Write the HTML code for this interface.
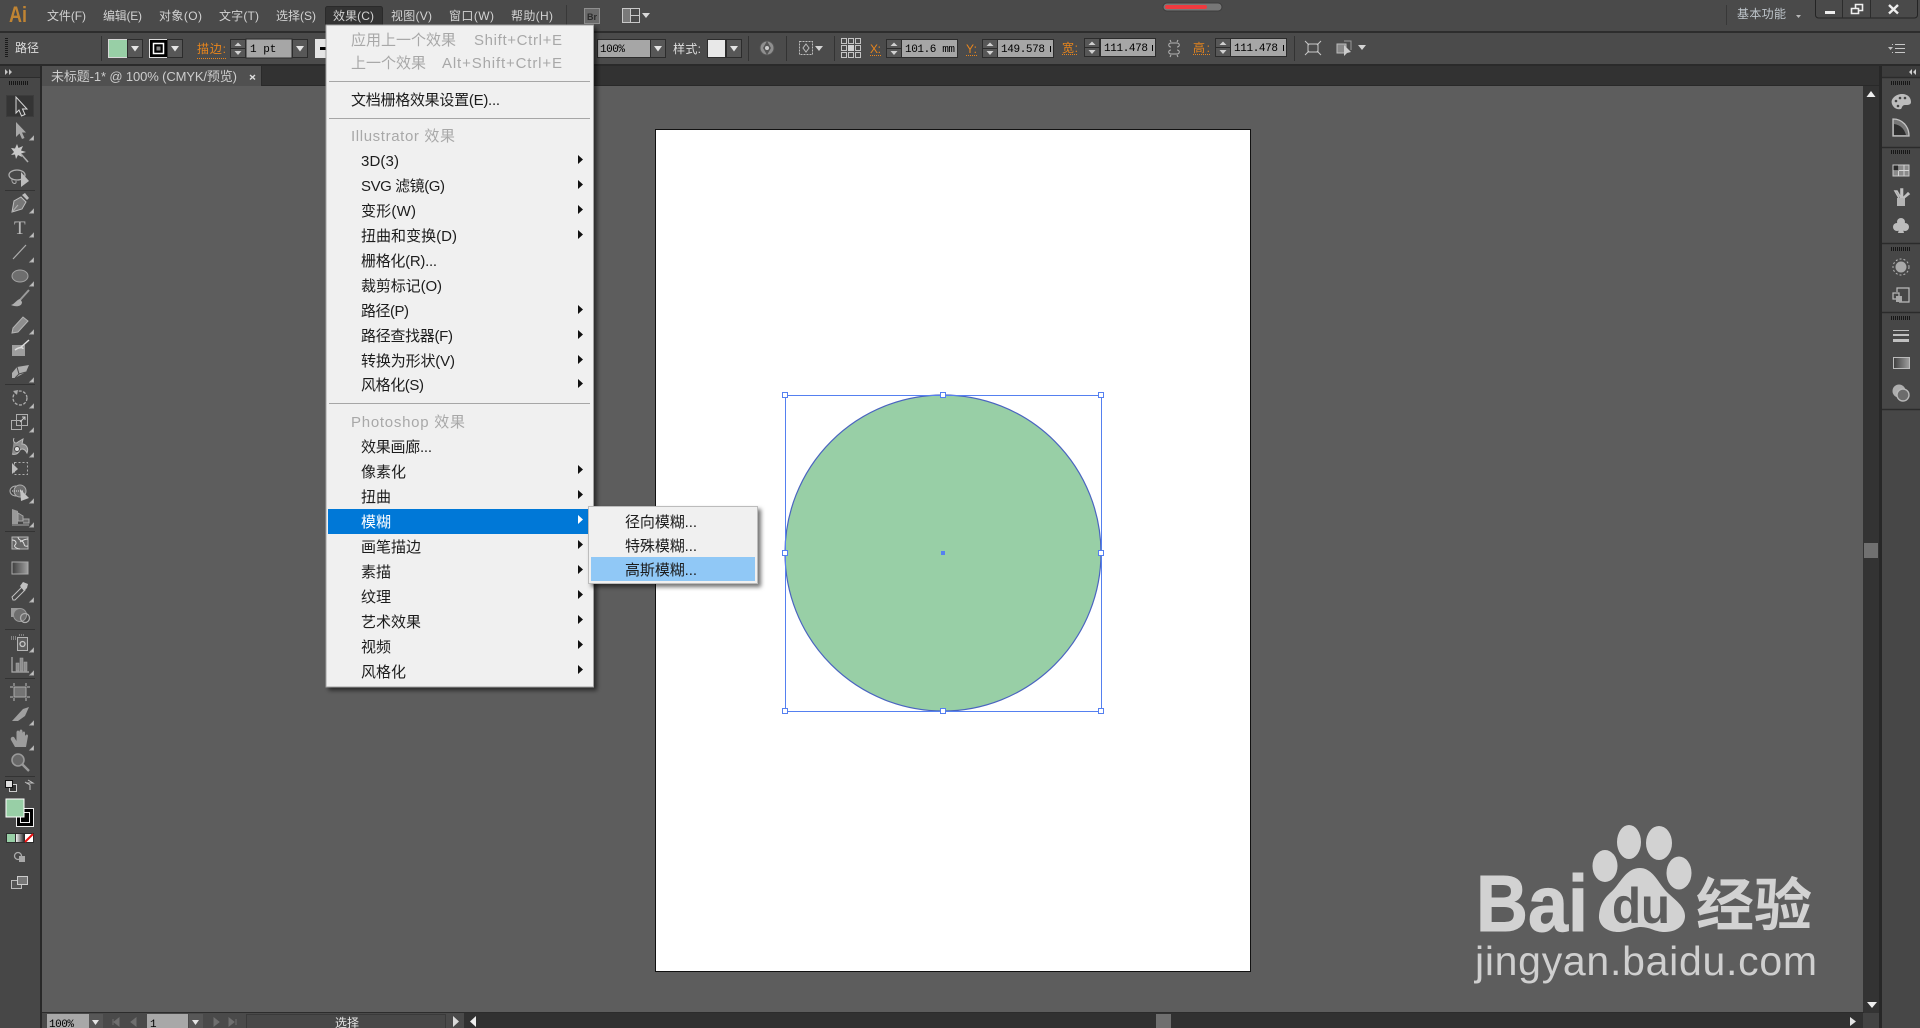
<!DOCTYPE html>
<html lang="zh"><head><meta charset="utf-8"><title>Illustrator</title>
<style>html,body{margin:0;padding:0;background:#5d5d5d;overflow:hidden}svg{display:block}text{font-family:"Liberation Sans","Noto Sans CJK SC",sans-serif}.m{font-family:"Liberation Mono","Noto Sans CJK SC",monospace}.b{font-size:12px;fill:#d2d2d2}.i{font-size:15px;fill:#1c1c1c}.d{font-size:15px;fill:#a8a8a8}.o{font-size:12px;fill:#e8851c}</style></head>
<body>
<svg xmlns="http://www.w3.org/2000/svg" width="1920" height="1028" viewBox="0 0 1920 1028">
<defs>
<linearGradient id="gr"><stop offset="0" stop-color="#3e3e3e"/><stop offset="1" stop-color="#a0a0a0"/></linearGradient>
<linearGradient id="gr2" x1="0" x2="1"><stop offset="0" stop-color="#fff"/><stop offset="1" stop-color="#222"/></linearGradient>
<filter id="sh" x="-5%" y="-5%" width="115%" height="115%"><feDropShadow dx="3" dy="3" stdDeviation="2" flood-color="#000" flood-opacity=".55"/></filter>
<g id="sp"><rect x=".5" y=".5" width="15" height="18" fill="#575757" stroke="#2c2c2c"/><path d="M1 9.500H15" stroke="#2c2c2c"/><path d="M8 3.500L11.500 7H4.500Z M8 16L11.500 12H4.500Z" fill="#d0d0d0"/></g>
<g id="ar"><rect x=".5" y=".5" width="15" height="18" fill="#575757" stroke="#2c2c2c"/><path d="M4 7H12L8 12.500Z" fill="#e4e4e4"/></g>
<path id="mk" d="M10 10H13.500V6.500Z" fill="#cfcfcf"/>
<path id="ma" d="M0 0V9L5 4.500Z" fill="#111"/>
<g id="hd"><rect x="-2.500" y="-2.500" width="5" height="5" fill="#fff" stroke="#5580f0"/></g>
<path id="gp" d="M0 0H19" stroke="#161616" stroke-width="4" stroke-dasharray="1 1" fill="none"/>
</defs>

<!-- base -->
<rect width="1920" height="1028" fill="#5d5d5d"/>
<rect width="1920" height="31" fill="#4a4a4a"/>
<rect y="31" width="1920" height="2" fill="#2d2d2d"/>
<rect y="33" width="1920" height="32" fill="#4b4b4b"/>
<rect y="64" width="1920" height="2" fill="#2a2a2a"/>
<rect y="66" width="1920" height="20" fill="#323232"/>
<rect y="85" width="1920" height="1" fill="#292929"/>

<!-- artboard -->
<rect x="655.500" y="129.500" width="595" height="842" fill="#fff" stroke="#111"/>
<circle cx="943" cy="553" r="158" fill="#98cfa6" stroke="#4a64c0" stroke-width="1.200"/>
<rect x="785.500" y="395.500" width="316" height="316" fill="none" stroke="#5580f0"/>
<use href="#hd" x="785" y="395"/><use href="#hd" x="943" y="395"/><use href="#hd" x="1101" y="395"/>
<use href="#hd" x="785" y="553"/><use href="#hd" x="1101" y="553"/>
<use href="#hd" x="785" y="711"/><use href="#hd" x="943" y="711"/><use href="#hd" x="1101" y="711"/>
<rect x="941" y="551" width="4" height="4" fill="#5580f0"/>

<!-- watermark -->
<g fill="#d2d2d2">
<text x="1476" y="931" font-size="80" font-weight="700" textLength="112" lengthAdjust="spacingAndGlyphs" stroke="#d2d2d2" stroke-width="1">Bai</text>
<ellipse cx="1605" cy="866" rx="12.500" ry="16"/><ellipse cx="1629" cy="842" rx="12" ry="17"/><ellipse cx="1659" cy="843" rx="13" ry="17"/><ellipse cx="1679" cy="873" rx="12.500" ry="16.500"/>
<path d="M1640 868C1625 868 1620 885 1610 893C1600 902 1599 912 1599 918C1600 928 1610 932 1618 932C1628 932 1632 927 1641 927C1650 927 1655 932 1665 932C1677 932 1685 925 1685 916C1685 905 1672 898 1665 890C1658 882 1652 868 1640 868Z"/>
<text x="1612" y="923" font-size="50" font-weight="700" textLength="58" lengthAdjust="spacingAndGlyphs" fill="#5d5d5d">du</text>
<text x="1696" y="925" font-size="57" font-weight="700" textLength="116" lengthAdjust="spacingAndGlyphs">经验</text>
<text x="1475" y="975" font-size="41" textLength="342" lengthAdjust="spacing" fill="#cfcfcf">jingyan.baidu.com</text>
</g>

<!-- title bar -->
<text x="9" y="22" font-size="22" font-weight="700" fill="#c08433" textLength="18" lengthAdjust="spacingAndGlyphs">Ai</text>
<rect x="325.500" y="6.500" width="57" height="20" rx="2" fill="#333" stroke="#2a2a2a"/>
<text class="b" x="47" y="20" textLength="39">文件(F)</text>
<text class="b" x="103" y="20" textLength="39">编辑(E)</text>
<text class="b" x="159" y="20" textLength="43">对象(O)</text>
<text class="b" x="219" y="20" textLength="40">文字(T)</text>
<text class="b" x="276" y="20" textLength="40">选择(S)</text>
<text class="b" x="333" y="20" textLength="41">效果(C)</text>
<text class="b" x="391" y="20" textLength="41">视图(V)</text>
<text class="b" x="449" y="20" textLength="45">窗口(W)</text>
<text class="b" x="511" y="20" textLength="42">帮助(H)</text>
<path d="M566.500 5V25" stroke="#383838"/>
<rect x="584.500" y="8.500" width="15" height="15" fill="#6a6a6a" stroke="#8f8f8f"/>
<text x="587" y="20" font-size="9" fill="#2b2b2b" font-weight="700">Br</text>
<rect x="622.500" y="8.500" width="17" height="14" fill="#4a4a4a" stroke="#c8c8c8"/><rect x="623" y="9" width="7" height="13" fill="#7a7a7a"/><path d="M630.500 9V22M631 15.500H639" stroke="#c8c8c8"/>
<path d="M642 13H650L646 18Z" fill="#d8d8d8"/>
<rect x="1163" y="3" width="59" height="8" rx="4" fill="#777" stroke="#3c3c3c"/>
<rect x="1165" y="5" width="42" height="4" rx="2" fill="#ef3a3f"/>
<path d="M1726.500 5V25" stroke="#383838"/>
<text x="1737" y="18" font-size="12" fill="#bfc6cc" textLength="49">基本功能</text>
<path d="M1796 15H1801L1798.500 18Z" fill="#b8b8b8"/>
<rect x="1815.500" y="-4" width="102" height="22" rx="3" fill="#4a4a4a" stroke="#242424"/>
<path d="M1842.500 0V18M1870.500 0V18" stroke="#2c2c2c"/>
<rect x="1825" y="11" width="10" height="3" fill="#eee"/>
<path d="M1851.500 8.500H1858.500V13.500H1851.500Z M1855.500 8V4.500H1862.500V10.500H1859" fill="none" stroke="#eee" stroke-width="1.600"/>
<path d="M1889 5L1898 13.500M1898 5L1889 13.500" stroke="#eee" stroke-width="2.400"/>

<!-- control bar -->
<path d="M6.500 38V58" stroke="#1a1a1a" stroke-width="3" stroke-dasharray="1 1"/>
<text x="15" y="52" font-size="12" fill="#dedede">路径</text>
<path d="M101.500 36V61" stroke="#333"/>
<rect x="108.500" y="39.500" width="19" height="18" fill="#98cfa6" stroke="#d8d8d8"/>
<g transform="translate(127,39)"><use href="#ar"/></g>
<rect x="149.500" y="39.500" width="18" height="18" fill="#000" stroke="#ddd"/><rect x="153.500" y="43.500" width="10" height="10" fill="none" stroke="#fff" stroke-width="1.500"/><rect x="156.500" y="46.500" width="4" height="4" fill="#888"/>
<g transform="translate(167,39)"><use href="#ar"/></g>
<text class="o" x="197" y="53" textLength="29">描边:</text>
<path d="M197 58.500H226" stroke="#e8851c" stroke-dasharray="1 1"/>
<g transform="translate(230,39)"><use href="#sp"/></g>
<rect x="246" y="39" width="46" height="19" fill="#a6a6a6" stroke="#2c2c2c"/>
<text class="m" x="250" y="52" font-size="11" fill="#000">1 pt</text>
<g transform="translate(292,39)"><use href="#ar"/></g>
<rect x="315" y="39" width="14" height="19" fill="#e4e4e4"/><rect x="320" y="47" width="6" height="3" fill="#000"/>

<rect x="597.500" y="39.500" width="53" height="18" fill="#a6a6a6" stroke="#2c2c2c"/>
<text class="m" x="600" y="52" font-size="11" fill="#000" textLength="25">100%</text>
<g transform="translate(650,39)"><use href="#ar"/></g>
<text x="673" y="53" font-size="12" fill="#dedede" textLength="28">样式:</text>
<rect x="707" y="39" width="19" height="19" fill="#2c2c2c"/><rect x="708" y="40" width="17" height="17" fill="#e8e8e8"/>
<g transform="translate(726,39)"><use href="#ar"/></g>
<path d="M748.500 36V61M786.500 36V61M834.500 36V61" stroke="#333"/>
<circle cx="767" cy="48" r="7" fill="#8f8f8f" stroke="#555"/><path d="M767 41L771 48L767 55L763 48Z" fill="#555"/><circle cx="767" cy="48" r="2" fill="#ccc"/>
<rect x="799.500" y="41.500" width="13" height="13" fill="none" stroke="#bcbcbc" stroke-dasharray="2 1"/><path d="M806 44L809 48L806 52L803 48Z" fill="none" stroke="#bcbcbc"/>
<path d="M815 46H823L819 51Z" fill="#d4d4d4"/>
<g fill="none" stroke="#c4c4c4"><rect x="841.500" y="38.500" width="5" height="5"/><rect x="848.500" y="38.500" width="5" height="5"/><rect x="855.500" y="38.500" width="5" height="5"/><rect x="841.500" y="45.500" width="5" height="5"/><rect x="855.500" y="45.500" width="5" height="5"/><rect x="841.500" y="52.500" width="5" height="5"/><rect x="848.500" y="52.500" width="5" height="5"/><rect x="855.500" y="52.500" width="5" height="5"/></g><rect x="848" y="45" width="6" height="6" fill="#d0d0d0"/>

<text class="o" x="870" y="53" textLength="11">X:</text><path d="M870 55.500H881" stroke="#e8851c" stroke-dasharray="1 1"/>
<g transform="translate(886,39)"><use href="#sp"/></g>
<rect x="901.500" y="39.500" width="56" height="18" fill="#a6a6a6" stroke="#2c2c2c"/>
<text class="m" x="905" y="52" font-size="11" fill="#000" textLength="50">101.6 mm</text>
<text class="o" x="966" y="53" textLength="11">Y:</text><path d="M966 55.500H977" stroke="#e8851c" stroke-dasharray="1 1"/>
<g transform="translate(982,39)"><use href="#sp"/></g>
<rect x="997.500" y="39.500" width="56" height="18" fill="#a6a6a6" stroke="#2c2c2c"/>
<text class="m" x="1001" y="52" font-size="11" fill="#000" textLength="44">149.578</text><rect x="1050" y="46" width="1" height="6" fill="#000"/>
<text class="o" x="1062" y="52" font-size="13" textLength="16">宽:</text><path d="M1062 54.500H1078" stroke="#e8851c" stroke-dasharray="1 1"/>
<g transform="translate(1084,38)"><use href="#sp"/></g>
<rect x="1100.500" y="38.500" width="55" height="18" fill="#a6a6a6" stroke="#2c2c2c"/>
<text class="m" x="1104" y="51" font-size="11" fill="#000" textLength="44">111.478</text><rect x="1152" y="45" width="1" height="6" fill="#000"/>
<path d="M1171 47C1168 47 1168 43 1171 43H1177C1180 43 1180 47 1177 47M1171 50C1168 50 1168 54 1171 54H1177C1180 54 1180 50 1177 50M1170 40L1171 42M1178 40L1177 42M1170 57L1171 55M1178 57L1177 55" fill="none" stroke="#b4b4b4"/>
<text class="o" x="1193" y="52" font-size="13" textLength="17">高:</text><path d="M1193 54.500H1210" stroke="#e8851c" stroke-dasharray="1 1"/>
<g transform="translate(1215,38)"><use href="#sp"/></g>
<rect x="1230.500" y="38.500" width="56" height="18" fill="#a6a6a6" stroke="#2c2c2c"/>
<text class="m" x="1234" y="51" font-size="11" fill="#000" textLength="44">111.478</text><rect x="1283" y="45" width="1" height="6" fill="#000"/>
<path d="M1294.500 36V61" stroke="#333"/>
<path d="M1308 44H1318V52H1308ZM1305 41L1309 45M1321 41L1317 45M1305 55L1309 51M1321 55L1317 51" fill="none" stroke="#c8c8c8"/>
<rect x="1337" y="44" width="9" height="9" fill="#888" stroke="#bbb"/><path d="M1344 41H1351V50" fill="none" stroke="#999"/><path d="M1344 45V56L1347 53L1351 52Z" fill="#ccc"/>
<path d="M1358 45H1366L1362 50Z" fill="#d4d4d4"/>
<path d="M1888 47H1893L1890.500 50Z" fill="#c0c0c0"/><path d="M1895 44.500H1905M1895 48.500H1905M1895 52.500H1905" stroke="#c8c8c8"/><path d="M1892 44.500H1893M1892 52.500H1893" stroke="#c8c8c8"/>

<!-- tab -->
<rect x="41" y="66" width="220" height="20" fill="#505050"/>
<path d="M261.500 66V86" stroke="#2a2a2a"/>
<text x="51" y="81" font-size="13" fill="#cdcdcd" textLength="186">未标题-1* @ 100% (CMYK/预览)</text>
<path d="M250 75L255 79.500M255 75L250 79.500" stroke="#dcdcdc" stroke-width="1.400"/>

<!-- left toolbar -->
<rect x="0" y="66" width="40" height="962" fill="#474747"/>
<rect x="0" y="66" width="40" height="11" fill="#3c3c3c"/>
<rect x="40" y="66" width="2" height="962" fill="#282828"/>
<path d="M0 77.500H40" stroke="#2c2c2c"/>
<path d="M5 69V75L8 72ZM9 69V75L12 72Z" fill="#c4c4c4"/>
<use href="#gp" x="9" y="83"/>
<rect x="6.500" y="95.500" width="27" height="21" fill="#343434" stroke="#3c3c3c"/>
<g fill="none" stroke="#adadad">
<path d="M16 97V113L19 110L21.500 116L25 114.500L22.500 109H27Z" fill="#3a3a3a" stroke="#d8d8d8"/>
<g transform="translate(20,130)"><path d="M-4-8V7L-.5 3.500L2 9L4.500 8L2 2.500H6Z" fill="#a8a8a8" stroke="none"/><use href="#mk"/></g>
<g transform="translate(20,153)"><path d="M-3-9L-1.500-5L3-7L1-2.500L6-1L1 .5L2 4L-2 2L-4 6L-5 1.500L-9 2L-6-1L-9-5L-5-4.500Z" fill="#c8c8c8" stroke="none"/><path d="M1 1L8 9" stroke-width="1.600"/></g>
<g transform="translate(20,178)"><ellipse cx="-3" cy="-3" rx="8" ry="5" stroke-width="1.300"/><path d="M1-6L9 3L1 9Z" fill="#bcbcbc" stroke="none"/><path d="M-8 1C-9 6-3 7-4 3"/></g>
<path d="M5 190.500H35M5 384.500H35M5 531.500H35M5 629.500H35M5 678.500H35M5 776.500H35" stroke="#333"/>
<g transform="translate(20,203)"><path d="M-8 9L-6-2L1-6L6-1L2 6Z" fill="#777" stroke="#bcbcbc"/><path d="M2-8L5-10L9-5L7-3Z" fill="#bcbcbc" stroke="none"/><path d="M-8 9L-2 2"/><use href="#mk"/></g>
<g transform="translate(20,227)"><text x="-6" y="7" font-size="19" fill="#b8b8b8" stroke="none" style="font-family:'Liberation Serif',serif">T</text><use href="#mk"/></g>
<g transform="translate(20,252)"><path d="M-7 7L6-7" stroke-width="1.200"/><use href="#mk"/></g>
<g transform="translate(20,276)"><ellipse cx="0" cy="0" rx="8" ry="6" fill="#6e6e6e" stroke="#a4a4a4"/><use href="#mk"/></g>
<g transform="translate(20,299)"><path d="M9-9L0 1" stroke-width="2" stroke="#9a9a9a"/><path d="M0 0C-4 1-5 5-9 6C-5 8 2 8 2 3Z" fill="#aeaeae" stroke="none"/></g>
<g transform="translate(20,324)"><path d="M-8 9L-7 4L3-7L8-3L-2 8Z" fill="#8e8e8e" stroke="#b4b4b4"/><use href="#mk"/></g>
<g transform="translate(20,348)"><path d="M-8-3H5V8H-8Z" fill="#9e9e9e" stroke="none"/><path d="M-5 2C-1-1 3-1 3 1M9-8L0 0" stroke="#ddd" stroke-width="1.500"/></g>
<g transform="translate(20,372)"><path d="M-8 1L-3-5L9-7L6 0L-5 6L-8 6Z" fill="#aeaeae" stroke="none"/><path d="M-3-5L-1 2L-5 6M-1 2L6 0" stroke="#4a4a4a"/><use href="#mk"/></g>
<g transform="translate(20,398)"><circle r="7" stroke-dasharray="3 1.500" stroke-width="1.300"/><path d="M-7-7L-2-8L-3-3Z" fill="#aaa" stroke="none"/><use href="#mk"/></g>
<g transform="translate(20,422)"><rect x="-8.500" y="-1.500" width="10" height="9"/><rect x="-3.500" y="-7.500" width="11" height="11"/><path d="M0 0L5-5M2-5H5V-2" stroke="#ccc"/><use href="#mk"/></g>
<g transform="translate(20,447)"><path d="M-6-9C-8-4-3-3-2-5L3-8L2-3C6-3 9 1 7 6C5 2 2 1 0 3C-2 7-5 8-8 7" fill="#8e8e8e" stroke="#bbb"/><circle cx="-3" cy="2" r="2.500" fill="#ddd" stroke="#444"/><use href="#mk"/></g>
<g transform="translate(20,469)"><rect x="-5.500" y="-6.500" width="13" height="12" stroke-dasharray="2 2"/><path d="M-8-6L-2 0L-8 5Z" fill="#bcbcbc" stroke="none"/></g>
<g transform="translate(20,493)"><ellipse cx="-4" cy="-2" rx="6" ry="5"/><ellipse cx="0" cy="-2" rx="6" ry="6" fill="#6c6c6c"/><path d="M0-4L9 5L1 8Z" fill="#c4c4c4" stroke="none"/><path d="M-8-2H3" stroke="#ddd" stroke-dasharray="1 1"/><use href="#mk"/></g>
<g transform="translate(20,517)"><path d="M-8-8L-2-6V7H-8Z" fill="#999" stroke="none"/><path d="M-2-4L3-1V4H-2ZM-8 8H9M3 2H9V6H3" fill="#6e6e6e" stroke="#a8a8a8"/><use href="#mk"/></g>
<g transform="translate(20,543)"><rect x="-8" y="-6" width="16" height="12" fill="#666" stroke="#b4b4b4"/><path d="M-8-3C-4-3-3 0-5 2S-2 6 0 6M-2-6C-2-3 1-3 3-1S3 4 8 3M8-4C5-4 3-3 0-1" stroke="#dedede"/></g>
<g transform="translate(20,568)"><rect x="-8" y="-6" width="16" height="12" fill="url(#gr)" stroke="#aaa"/></g>
<g transform="translate(20,592)"><path d="M-7 8L-8 5L2-5L5-2L-5 8Z" stroke="#c0c0c0"/><path d="M0-6L3-10L8-8L7-4L4-1Z" fill="#c0c0c0" stroke="none"/><use href="#mk"/></g>
<g transform="translate(20,615)"><rect x="-9" y="-7" width="9" height="9" fill="#9a9a9a" stroke="none"/><circle cx="0" cy="0" r="6.500" fill="#6e6e6e" stroke="#999"/><circle cx="5" cy="3" r="4.500" stroke-width="1.300"/></g>
<g transform="translate(20,642)"><rect x="-2.500" y="-4.500" width="10" height="13" fill="#5e5e5e" stroke="#b4b4b4"/><circle cx="2.500" cy="2" r="2.500" stroke="#c4c4c4" stroke-width="1.300"/><path d="M-9-5H-4M-9-3H-4M-1-7H4" stroke="#bbb" stroke-dasharray="1 1"/><use href="#mk"/></g>
<g transform="translate(20,665)"><path d="M-8-8V7H9" stroke-width="1.200"/><rect x="-4" y="-2" width="3" height="8" fill="#8c8c8c" stroke="#aaa" stroke-width=".5"/><rect x="0" y="-7" width="3" height="13" fill="#8c8c8c" stroke="#aaa" stroke-width=".5"/><rect x="4" y="-3" width="3" height="9" fill="#8c8c8c" stroke="#aaa" stroke-width=".5"/><use href="#mk"/></g>
<g transform="translate(20,692)"><rect x="-6" y="-5" width="12" height="10" fill="#747474" stroke="#aaa"/><path d="M-10-5H-7M7-5H10M-10 5H-7M7 5H10M-6-9V-6M6-9V-6M-6 9V6M6 9V6" stroke="#bbb"/></g>
<g transform="translate(20,715)"><path d="M-8 6L3-6L9-8L5 1L-2 6Z" fill="#a0a0a0" stroke="none"/><use href="#mk"/></g>
<g transform="translate(20,740)"><path d="M-9 0L-5 7H6L8-4C8-6 6-6 5-4V-7C5-9 3-9 2.500-7V-9C2-11 0-11-.5-9V-8C-1-10-3-10-3.500-8V1L-6-3C-8-4-10-2-9 0Z" fill="#9c9c9c" stroke="none"/><use href="#mk"/></g>
<g transform="translate(20,763)"><circle cx="-2" cy="-3" r="6" fill="#686868" stroke="#999" stroke-width="1.600"/><path d="M2 1L9 8" stroke-width="2.400" stroke="#999"/></g>
</g>
<rect x="9.500" y="784.500" width="7" height="7" fill="#333" stroke="#ccc"/><rect x="5.500" y="780.500" width="7" height="7" fill="#ddd" stroke="#111"/>
<path d="M28 780L33 783H26M30 790V785L25 782" fill="none" stroke="#c0c0c0"/>
<rect x="16.500" y="808.500" width="17" height="18" fill="#000" stroke="#eee"/><rect x="20.500" y="812.500" width="9" height="10" fill="none" stroke="#eee"/>
<rect x="6" y="799" width="18" height="18" fill="#98cfa6" stroke="#fff"/>
<rect x="6.500" y="833.500" width="9" height="9" fill="#98cfa6" stroke="#2c2c2c"/>
<rect x="15.500" y="833.500" width="9" height="9" fill="url(#gr2)" stroke="#2c2c2c"/>
<rect x="24.500" y="833.500" width="9" height="9" fill="#fff" stroke="#2c2c2c"/><path d="M25 842L33 834" stroke="#e81010" stroke-width="2"/>
<circle cx="18" cy="856" r="3.500" fill="none" stroke="#aaa" stroke-width="1.300"/><rect x="19" y="856" width="6" height="6" fill="#a8a8a8"/>
<rect x="11.500" y="880.500" width="10" height="8" fill="#555" stroke="#bbb"/><rect x="17.500" y="876.500" width="10" height="8" fill="#777" stroke="#ccc"/>

<!-- scrollbar + right dock -->
<rect x="1863" y="86" width="16" height="927" fill="#333"/>
<rect x="1879" y="66" width="3" height="962" fill="#272727"/>
<path d="M1871 91L1875.500 97H1866.500Z" fill="#eee"/>
<path d="M1867 1002H1877L1872 1008Z" fill="#eee"/>
<rect x="1864" y="543" width="14" height="15" fill="#707070"/>
<rect x="1882" y="66" width="38" height="962" fill="#474747"/>
<rect x="1882" y="66" width="38" height="11" fill="#3c3c3c"/>
<path d="M1882 77.500H1920M1882 147.500H1920M1882 243.500H1920M1882 312.500H1920M1882 409.500H1920" stroke="#2b2b2b" stroke-width="1.500"/>
<path d="M1916 69V75L1913 72ZM1912 69V75L1909 72Z" fill="#d0d0d0"/>
<use href="#gp" x="1891" y="83"/><use href="#gp" x="1891" y="152"/><use href="#gp" x="1891" y="249"/><use href="#gp" x="1891" y="318"/>
<g transform="translate(1901,102)"><path d="M-9 2C-11-3-5-8 1-8C6-8 10-5 10 0C10 3 7 3 4 3C1 3 1 6 0 7C-5 8-8 5-9 2Z" fill="#bcbcbc"/><circle cx="-5" cy="-1" r="1.300" fill="#444"/><circle cx="-1" cy="-4" r="1.300" fill="#444"/><circle cx="4" cy="-4" r="1.300" fill="#444"/><circle cx="-3" cy="4" r="1.300" fill="#444"/></g>
<g transform="translate(1901,128)"><path d="M-8-9C1-9 8-2 8 8H-8Z" fill="#777" stroke="#c4c4c4" stroke-width="1.300"/><path d="M-7 7L-7-4C-1-3 3 0 5 7Z" fill="#2e2e2e"/></g>
<g transform="translate(1901,170)"><rect x="-8" y="-5" width="16" height="11" fill="#8a8a8a" stroke="#c8c8c8"/><path d="M-2.500-5V6M3-5V6M-8 .5H8" stroke="#d4d4d4"/><rect x="-7.500" y="-4.500" width="5" height="5" fill="#2a2a2a"/></g>
<g transform="translate(1901,198)"><rect x="-4" y="0" width="8" height="8" fill="#b4b4b4"/><path d="M-2 0L-6-7L-4-7L0 0M0 0V-9H1.500V0M2 0L7-5L8-4L3 0" fill="none" stroke="#c0c0c0" stroke-width="1.600"/></g>
<g transform="translate(1901,226)" fill="#bcbcbc"><circle cx="0" cy="-4" r="4"/><circle cx="-4" cy="1" r="4"/><circle cx="4" cy="1" r="4"/><path d="M-1 0H1L3 7H-3Z"/></g>
<g transform="translate(1901,267)"><circle r="5.500" fill="#a8a8a8"/><circle r="8" fill="none" stroke="#b4b4b4" stroke-dasharray="2 2"/></g>
<g transform="translate(1901,295)"><path d="M-4-3V-7H8V7H-2" fill="none" stroke="#bcbcbc" stroke-width="1.200"/><rect x="-8" y="-2" width="6" height="6" fill="none" stroke="#bbb" stroke-width="1.200"/><rect x="-5" y="1" width="6" height="6" fill="#a8a8a8"/></g>
<g transform="translate(1901,336)" fill="#c0c0c0"><rect x="-8" y="-6" width="16" height="1"/><rect x="-8" y="-2" width="16" height="2"/><rect x="-8" y="3" width="16" height="3"/></g>
<rect x="1893.500" y="357.500" width="16" height="11" fill="url(#gr)" stroke="#bbb"/>
<g transform="translate(1901,393)"><circle cx="-2" cy="-2" r="6.500" fill="#aeaeae"/><circle cx="2" cy="2" r="6" fill="#6c6c6c" stroke="#b8b8b8" stroke-width="1.400"/></g>

<!-- status bar -->
<rect x="42" y="1013" width="1822" height="15" fill="#4a4a4a"/>
<rect x="42" y="1012" width="1822" height="1" fill="#2c2c2c"/>
<rect x="464" y="1013" width="1399" height="15" fill="#313131"/>
<rect x="47" y="1014" width="42" height="14" fill="#a8a8a8"/><text class="m" x="49" y="1027" font-size="11" fill="#000" textLength="25">100%</text>
<rect x="89" y="1014" width="14" height="14" fill="#575757"/><path d="M92 1020H99L95.500 1025Z" fill="#e4e4e4"/>
<path d="M113 1019V1025M119 1018L114 1022L119 1026ZM136 1018L131 1022L136 1026Z" fill="#6f6f6f" stroke="#6f6f6f"/>
<rect x="147" y="1014" width="41" height="14" fill="#a8a8a8"/><text class="m" x="150" y="1027" font-size="11" fill="#000">1</text>
<rect x="189" y="1014" width="14" height="14" fill="#575757"/><path d="M192 1020H199L195.500 1025Z" fill="#e4e4e4"/>
<path d="M214 1018L219 1022L214 1026ZM229 1018L234 1022L229 1026ZM236 1019V1025" fill="#6f6f6f" stroke="#6f6f6f"/>
<rect x="246.500" y="1014.500" width="199" height="14" fill="#484848" stroke="#3a3a3a"/>
<text x="335" y="1027" font-size="12" fill="#e4e4e4">选择</text>
<path d="M453 1016V1027L459 1021.500Z" fill="#dadada"/>
<path d="M476 1016V1027L470 1021.500Z" fill="#eee"/>
<rect x="1156" y="1014" width="15" height="14" fill="#6f6f6f"/>
<path d="M1850 1017V1026L1856 1021.500Z" fill="#e4e4e4"/>
<rect x="1863" y="1013" width="16" height="15" fill="#434343"/>

<!-- effect menu -->
<g filter="url(#sh)"><rect x="326" y="25" width="267.500" height="662" fill="#f0f0f0" stroke="#a2a2a2"/></g>
<path d="M329 81.500H590M329 118.500H590M329 403.500H590" stroke="#a6a6a6"/>
<text class="d" x="351" y="45" textLength="105">应用上一个效果</text>
<text class="d" x="474" y="45" textLength="88">Shift+Ctrl+E</text>
<text class="d" x="351" y="68" textLength="75">上一个效果</text>
<text class="d" x="442" y="68" textLength="120">Alt+Shift+Ctrl+E</text>
<text class="i" x="351" y="105" textLength="149">文档栅格效果设置(E)...</text>
<text class="d" x="351" y="141" textLength="104">Illustrator 效果</text>
<text class="i" x="361" y="166" textLength="38">3D(3)</text>
<text class="i" x="361" y="191" textLength="84">SVG 滤镜(G)</text>
<text class="i" x="361" y="216" textLength="55">变形(W)</text>
<text class="i" x="361" y="241" textLength="96">扭曲和变换(D)</text>
<text class="i" x="361" y="266" textLength="76">栅格化(R)...</text>
<text class="i" x="361" y="291" textLength="81">裁剪标记(O)</text>
<text class="i" x="361" y="316" textLength="48">路径(P)</text>
<text class="i" x="361" y="341" textLength="92">路径查找器(F)</text>
<text class="i" x="361" y="366" textLength="94">转换为形状(V)</text>
<text class="i" x="361" y="390" textLength="63">风格化(S)</text>
<text class="d" x="351" y="427" textLength="114">Photoshop 效果</text>
<text class="i" x="361" y="452" textLength="71">效果画廊...</text>
<text class="i" x="361" y="477">像素化</text>
<text class="i" x="361" y="502">扭曲</text>
<rect x="328" y="509" width="260" height="25" fill="#0078d7"/>
<text class="i" x="361" y="527" style="fill:#fff">模糊</text>
<text class="i" x="361" y="552">画笔描边</text>
<text class="i" x="361" y="577">素描</text>
<text class="i" x="361" y="602">纹理</text>
<text class="i" x="361" y="627">艺术效果</text>
<text class="i" x="361" y="652">视频</text>
<text class="i" x="361" y="677">风格化</text>
<use href="#ma" x="578" y="155"/><use href="#ma" x="578" y="180"/><use href="#ma" x="578" y="205"/><use href="#ma" x="578" y="230"/>
<use href="#ma" x="578" y="305"/><use href="#ma" x="578" y="330"/><use href="#ma" x="578" y="355"/><use href="#ma" x="578" y="379"/>
<use href="#ma" x="578" y="465"/><use href="#ma" x="578" y="490"/>
<path d="M578 515V524L583 519.500Z" fill="#fff"/>
<use href="#ma" x="578" y="540"/><use href="#ma" x="578" y="565"/><use href="#ma" x="578" y="590"/><use href="#ma" x="578" y="615"/><use href="#ma" x="578" y="640"/><use href="#ma" x="578" y="665"/>

<!-- blur submenu -->
<g filter="url(#sh)"><rect x="588.500" y="506.500" width="169" height="77" fill="#f0f0f0" stroke="#bcbcbc"/></g>
<rect x="591" y="557" width="164" height="24" fill="#90c8f6"/>
<text class="i" x="625" y="527" textLength="72">径向模糊...</text>
<text class="i" x="625" y="551" textLength="72">特殊模糊...</text>
<text class="i" x="625" y="575" textLength="72">高斯模糊...</text>
</svg>
</body></html>
